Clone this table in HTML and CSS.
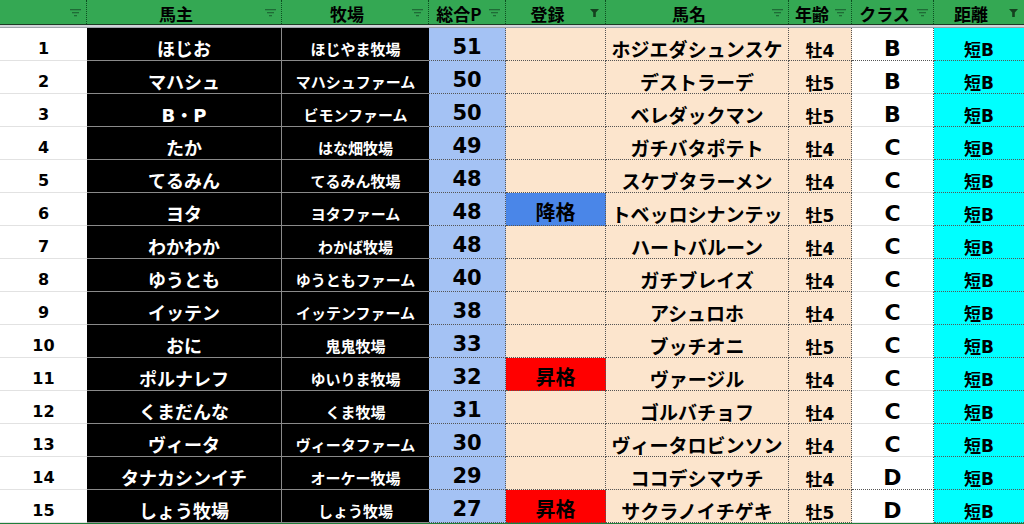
FILE: index.html
```html
<!DOCTYPE html>
<html lang="ja">
<head>
<meta charset="utf-8">
<title>馬主一覧</title>
<link rel="stylesheet" href="styles.css">
</head>
<body>
<div class="sheet">
  <div class="hdr">
    <div class="h"><span class="hl"></span><svg class="fi" viewBox="0 0 11 8"><rect x="0" y="0" width="11" height="1.3"/><rect x="2" y="3" width="7" height="1.3"/><rect x="4" y="6" width="3" height="1.3"/></svg></div>
    <div class="h"><span class="hl">馬主</span><svg class="fi" viewBox="0 0 11 8"><rect x="0" y="0" width="11" height="1.3"/><rect x="2" y="3" width="7" height="1.3"/><rect x="4" y="6" width="3" height="1.3"/></svg></div>
    <div class="h"><span class="hl">牧場</span><svg class="fi" viewBox="0 0 11 8"><rect x="0" y="0" width="11" height="1.3"/><rect x="2" y="3" width="7" height="1.3"/><rect x="4" y="6" width="3" height="1.3"/></svg></div>
    <div class="h"><span class="hl">総合P</span><svg class="fi" viewBox="0 0 11 8"><rect x="0" y="0" width="11" height="1.3"/><rect x="2" y="3" width="7" height="1.3"/><rect x="4" y="6" width="3" height="1.3"/></svg></div>
    <div class="h"><span class="hl">登録</span><svg class="fi on" viewBox="0 0 11 8"><path d="M1 0H10L6.8 3.4V8H4.2V3.4Z"/></svg></div>
    <div class="h"><span class="hl">馬名</span><svg class="fi" viewBox="0 0 11 8"><rect x="0" y="0" width="11" height="1.3"/><rect x="2" y="3" width="7" height="1.3"/><rect x="4" y="6" width="3" height="1.3"/></svg></div>
    <div class="h"><span class="hl">年齢</span><svg class="fi" viewBox="0 0 11 8"><rect x="0" y="0" width="11" height="1.3"/><rect x="2" y="3" width="7" height="1.3"/><rect x="4" y="6" width="3" height="1.3"/></svg></div>
    <div class="h"><span class="hl">クラス</span><svg class="fi" viewBox="0 0 11 8"><rect x="0" y="0" width="11" height="1.3"/><rect x="2" y="3" width="7" height="1.3"/><rect x="4" y="6" width="3" height="1.3"/></svg></div>
    <div class="h last"><span class="hl">距離</span><svg class="fi on" viewBox="0 0 11 8"><path d="M1 0H10L6.8 3.4V8H4.2V3.4Z"/></svg></div>
  </div>
  <div class="freeze"></div>
  <div class="rows">
    <div class="row"><div class="c num">1</div><div class="c owner">ほじお</div><div class="c farm">ほじやま牧場</div><div class="c pt">51</div><div class="c reg"></div><div class="c horse">ホジエダシュンスケ</div><div class="c age">牡4</div><div class="c cls dot">B</div><div class="c dist">短B</div></div>
    <div class="row"><div class="c num">2</div><div class="c owner">マハシュ</div><div class="c farm">マハシュファーム</div><div class="c pt">50</div><div class="c reg"></div><div class="c horse">デストラーデ</div><div class="c age">牡5</div><div class="c cls">B</div><div class="c dist">短B</div></div>
    <div class="row"><div class="c num">3</div><div class="c owner">B・P</div><div class="c farm">ビモンファーム</div><div class="c pt">50</div><div class="c reg"></div><div class="c horse">ベレダックマン</div><div class="c age">牡5</div><div class="c cls">B</div><div class="c dist">短B</div></div>
    <div class="row"><div class="c num">4</div><div class="c owner">たか</div><div class="c farm">はな畑牧場</div><div class="c pt">49</div><div class="c reg"></div><div class="c horse">ガチバタポテト</div><div class="c age">牡4</div><div class="c cls">C</div><div class="c dist">短B</div></div>
    <div class="row"><div class="c num">5</div><div class="c owner">てるみん</div><div class="c farm">てるみん牧場</div><div class="c pt">48</div><div class="c reg"></div><div class="c horse">スケブタラーメン</div><div class="c age">牡4</div><div class="c cls">C</div><div class="c dist">短B</div></div>
    <div class="row"><div class="c num">6</div><div class="c owner">ヨタ</div><div class="c farm">ヨタファーム</div><div class="c pt">48</div><div class="c reg down">降格</div><div class="c horse">トベッロシナンテッ</div><div class="c age">牡5</div><div class="c cls">C</div><div class="c dist">短B</div></div>
    <div class="row"><div class="c num">7</div><div class="c owner">わかわか</div><div class="c farm">わかば牧場</div><div class="c pt">48</div><div class="c reg"></div><div class="c horse">ハートバルーン</div><div class="c age">牡4</div><div class="c cls">C</div><div class="c dist">短B</div></div>
    <div class="row"><div class="c num">8</div><div class="c owner">ゆうとも</div><div class="c farm">ゆうともファーム</div><div class="c pt">40</div><div class="c reg"></div><div class="c horse">ガチブレイズ</div><div class="c age">牡4</div><div class="c cls">C</div><div class="c dist">短B</div></div>
    <div class="row"><div class="c num">9</div><div class="c owner">イッテン</div><div class="c farm">イッテンファーム</div><div class="c pt">38</div><div class="c reg"></div><div class="c horse">アシュロホ</div><div class="c age">牡4</div><div class="c cls">C</div><div class="c dist">短B</div></div>
    <div class="row"><div class="c num">10</div><div class="c owner">おに</div><div class="c farm">鬼鬼牧場</div><div class="c pt">33</div><div class="c reg"></div><div class="c horse">ブッチオニ</div><div class="c age">牡5</div><div class="c cls">C</div><div class="c dist">短B</div></div>
    <div class="row"><div class="c num">11</div><div class="c owner">ポルナレフ</div><div class="c farm">ゆいりま牧場</div><div class="c pt">32</div><div class="c reg up">昇格</div><div class="c horse">ヴァージル</div><div class="c age">牡4</div><div class="c cls">C</div><div class="c dist">短B</div></div>
    <div class="row"><div class="c num">12</div><div class="c owner">くまだんな</div><div class="c farm">くま牧場</div><div class="c pt">31</div><div class="c reg"></div><div class="c horse">ゴルバチョフ</div><div class="c age">牡4</div><div class="c cls">C</div><div class="c dist">短B</div></div>
    <div class="row"><div class="c num">13</div><div class="c owner">ヴィータ</div><div class="c farm">ヴィータファーム</div><div class="c pt">30</div><div class="c reg"></div><div class="c horse">ヴィータロビンソン</div><div class="c age">牡4</div><div class="c cls">C</div><div class="c dist">短B</div></div>
    <div class="row"><div class="c num">14</div><div class="c owner">タナカシンイチ</div><div class="c farm">オーケー牧場</div><div class="c pt">29</div><div class="c reg"></div><div class="c horse">ココデシマウチ</div><div class="c age">牡4</div><div class="c cls dot">D</div><div class="c dist">短B</div></div>
    <div class="row"><div class="c num">15</div><div class="c owner">しょう牧場</div><div class="c farm">しょう牧場</div><div class="c pt">27</div><div class="c reg up">昇格</div><div class="c horse">サクラノイチゲキ</div><div class="c age">牡5</div><div class="c cls">D</div><div class="c dist">短B</div></div>
  </div>
  <div class="endline"></div>
</div>
</body>
</html>
```

FILE: styles.css
```css
* { box-sizing: border-box; }
html, body { margin: 0; padding: 0; background: #fff; }
body {
  width: 1024px;
  height: 524px;
  overflow: hidden;
  font-family: "DejaVu Sans", "Noto Sans CJK JP", sans-serif;
  font-weight: 700;
  color: #000;
}
.sheet {
  display: flex;
  flex-direction: column;
  width: 1024px;
  height: 524px;
}
.hdr, .row {
  display: grid;
  grid-template-columns: 87px 195px 147px 77px 100px 183px 63px 82px 90px;
}
.hdr {
  height: 28px;
  background: #34a853;
  border-bottom: 1px solid #1d3a25;
}
.h {
  display: flex;
  align-items: center;
  border-right: 1px dotted #0c4f21;
  padding-top: 3px;
  font-family: "Noto Sans CJK JP", sans-serif;
  font-size: 17px;
  line-height: 1;
}
.h.last { border-right: none; }
.hl {
  flex: 1;
  text-align: center;
  white-space: nowrap;
}
.fi {
  width: 11px;
  height: 8px;
  margin-right: 5px;
  fill: #1f6b36;
  flex: none;
}
.fi.on { fill: #15401f; }
.freeze {
  height: 4px;
  background: #d2d5da;
  border-bottom: 1px solid #9ea3aa;
}
.rows {
  flex: 1;
  display: grid;
  grid-template-rows: repeat(15, 1fr);
}
.endline {
  height: 1px;
  background: #1e7e3a;
}
.c {
  display: flex;
  align-items: center;
  justify-content: center;
  white-space: nowrap;
  line-height: 1;
  border-right: 1px dotted #555;
  border-bottom: 1px dotted #555;
  overflow: hidden;
}
.num {
  background: #fff;
  border-right: none;
  border-bottom: 1px solid #e2e2e2;
  font-size: 16px;
  padding-top: 9px;
}
.owner, .farm {
  background: #000;
  color: #fff;
  border-right: 1px solid #8a8a8a;
  border-bottom: 1px solid #8a8a8a;
}
.owner { font-size: 18px; padding-top: 12px; }
.farm { font-size: 15px; padding-top: 12px; border-right: none; }
.pt {
  background: #a4c2f4;
  font-size: 21px;
  padding-top: 7px;
}
.reg {
  background: #fce5cd;
  font-family: "Noto Sans CJK JP", sans-serif;
  font-size: 20px;
  padding-top: 5px;
}
.reg.down { background: #4a86e8; }
.reg.up { background: #ff0000; }
.horse {
  background: #fce5cd;
  font-family: "Noto Sans CJK JP", sans-serif;
  font-size: 19px;
  padding-top: 9px;
}
.age {
  background: #fce5cd;
  font-size: 17px;
  padding-top: 15px;
}
.cls {
  background: #fff;
  font-size: 22px;
  padding-top: 9px;
  border-bottom: 1px solid #e2e2e2;
}
.cls.dot { border-bottom: 1px dotted #555; }
.dist {
  background: #00ffff;
  font-size: 17px;
  padding-top: 12px;
  border-right: none;
}
```
